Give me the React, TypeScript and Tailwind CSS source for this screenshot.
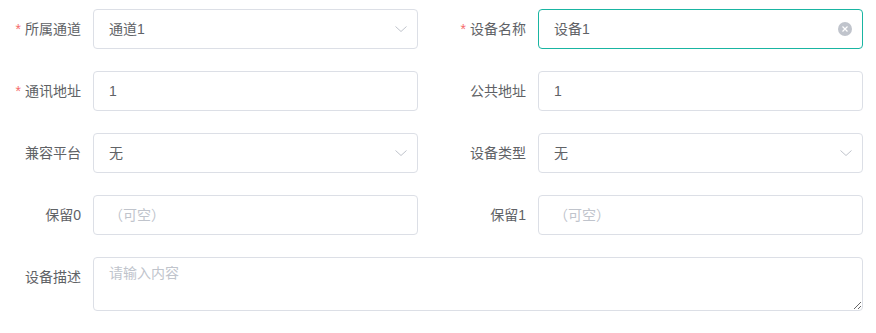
const FONT = "font-['Helvetica_Neue','Liberation_Sans','Noto_Sans_CJK_SC',sans-serif]";

type Field = {
  label: string;
  required?: boolean;
  value?: string;
  placeholder?: string;
  kind?: "input" | "select" | "clearable";
};

const FIELDS: Field[] = [
  { label: "所属通道", required: true, value: "通道1", kind: "select" },
  { label: "设备名称", required: true, value: "设备1", kind: "clearable" },
  { label: "通讯地址", required: true, value: "1" },
  { label: "公共地址", value: "1" },
  { label: "兼容平台", value: "无", kind: "select" },
  { label: "设备类型", value: "无", kind: "select" },
  { label: "保留0", placeholder: "（可空）" },
  { label: "保留1", placeholder: "（可空）" },
];

function Label({ text, required }: { text: string; required?: boolean }) {
  return (
    <label className="w-[80px] shrink-0 pr-3 text-right text-sm leading-[40px] text-[#606266]">
      {required && <span className="mr-1 text-[#f56c6c]">*</span>}
      {text}
    </label>
  );
}

function Chevron() {
  return (
    <svg className="h-3 w-3 text-[#c0c4cc]" viewBox="0 0 12 12" fill="none" stroke="currentColor" strokeWidth="1">
      <path d="M0.5 3.5l5.5 5 5.5-5" />
    </svg>
  );
}

function ClearIcon() {
  return (
    <span className="flex h-[14px] w-[14px] items-center justify-center rounded-full bg-[#c0c4cc]">
      <svg className="h-2 w-2" viewBox="0 0 8 8" stroke="white" strokeWidth="1.2">
        <path d="M1.5 1.5l5 5M6.5 1.5l-5 5" />
      </svg>
    </span>
  );
}

function FieldBox({ field }: { field: Field }) {
  const focused = field.kind === "clearable";
  return (
    <div
      className={`flex h-10 flex-1 items-center rounded border bg-white pl-[15px] pr-[10px] text-sm ${
        focused ? "border-[#19b5a2]" : "border-[#dcdfe6]"
      }`}
    >
      {field.value ? (
        <span className="flex-1 text-[#606266]">{field.value}</span>
      ) : (
        <span className="flex-1 text-[#c0c4cc]">{field.placeholder}</span>
      )}
      {field.kind === "select" && <Chevron />}
      {field.kind === "clearable" && <ClearIcon />}
    </div>
  );
}

export default function App() {
  return (
    <div className={`min-h-[333px] w-[876px] bg-white px-[13px] pt-[9px] ${FONT}`}>
      <div className="grid grid-cols-2 gap-x-10">
        {FIELDS.map((f) => (
          <div key={f.label} className="mb-[22px] flex">
            <Label text={f.label} required={f.required} />
            <FieldBox field={f} />
          </div>
        ))}

        {/* 描述 */}
        <div className="col-span-2 mb-[22px] flex">
          <Label text="设备描述" />
          <textarea
            rows={2}
            placeholder="请输入内容"
            className="block h-[54px] flex-1 resize-y rounded border border-[#dcdfe6] px-[15px] py-[5px] text-sm leading-normal text-[#606266] outline-none placeholder:text-[#c0c4cc]"
          />
        </div>
      </div>
    </div>
  );
}
